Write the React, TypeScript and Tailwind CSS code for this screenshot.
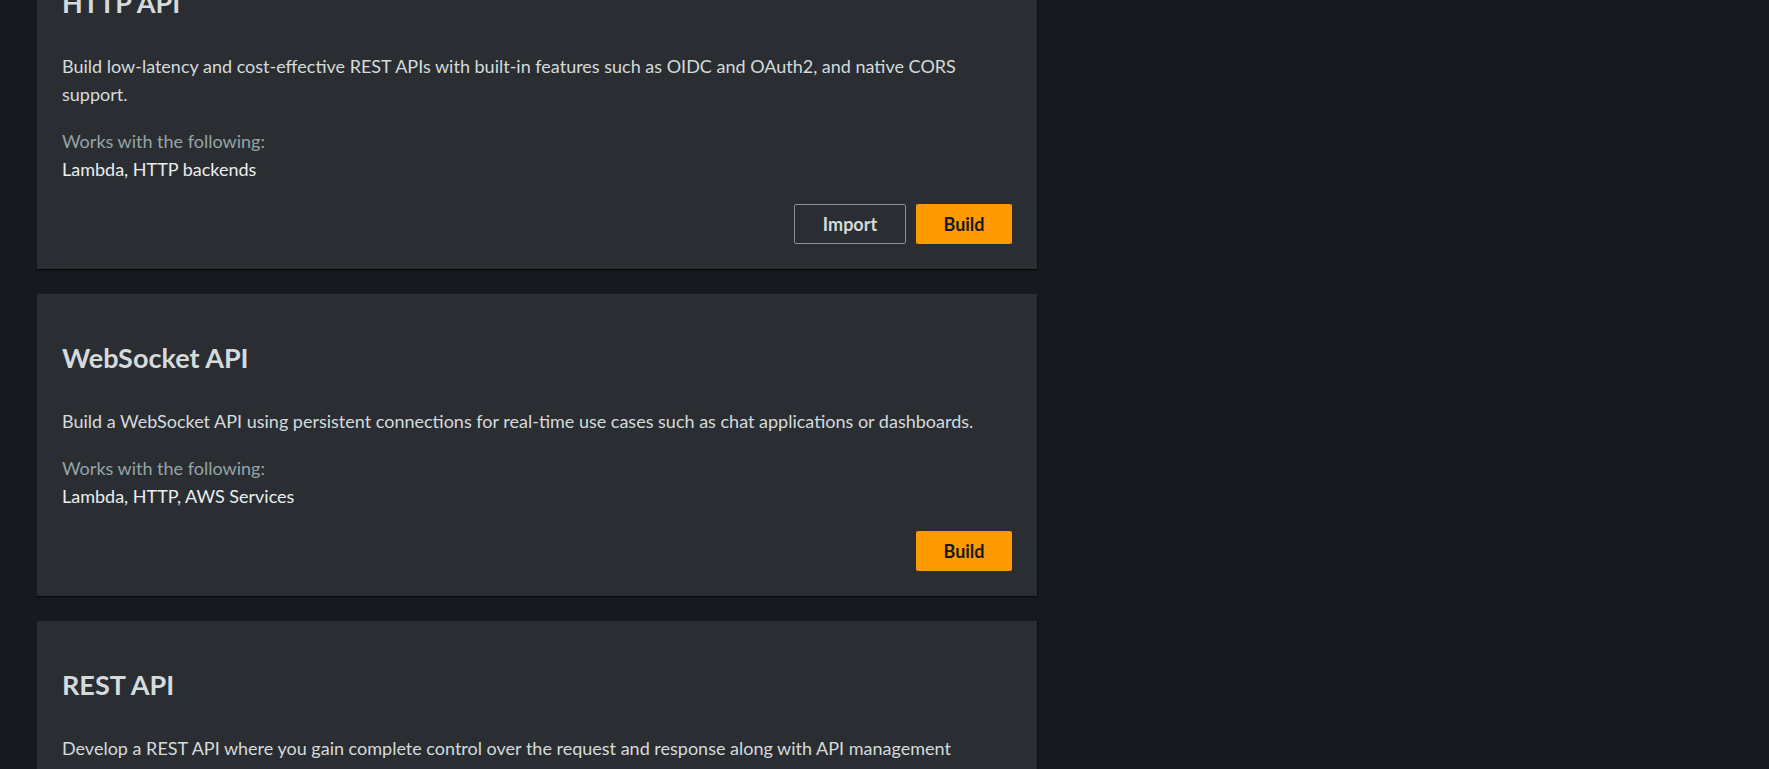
import React from "react";

const font = { fontFamily: "Lato, 'Noto Sans', sans-serif" };

type CardProps = {
  title: string;
  desc: string;
  works?: string;
  importBtn?: boolean;
};

function Card({ title, desc, works, importBtn }: CardProps) {
  return (
    <div className="bg-[#2a2e33] px-[25px] pt-[50px] pb-[25px] shadow-[0_1px_1px_0_rgba(0,0,0,0.5),1px_1px_1px_0_rgba(0,0,0,0.25)]">
      <h2 className="text-[27px] leading-[28px] font-bold text-[#d5dbdb]">{title}</h2>
      <p className="mt-[35px] text-[18px] leading-[28px] text-[#d5dbdb]">{desc}</p>
      {works && (
        <>
          <div className="mt-[20px] text-[18px] leading-[27.5px]">
            <div className="text-[#95a5a6]">Works with the following:</div>
            <div className="text-[#eaeded]">{works}</div>
          </div>
          <div className="mt-[21px] flex justify-end gap-[10px]">
            {importBtn && (
              <button className="h-[40px] w-[112px] rounded-[2px] border border-[#879596] text-[18px] font-bold text-[#d5dbdb]">
                Import
              </button>
            )}
            <button className="h-[40px] w-[96px] rounded-[2px] bg-[#ff9900] text-[18px] font-bold text-[#16191f]">
              Build
            </button>
          </div>
        </>
      )}
    </div>
  );
}

export default function App() {
  return (
    <div className="h-[769px] w-full overflow-hidden bg-[#16191f]" style={font}>
      <div className="-mt-[61px] ml-[37px] flex w-[1000px] flex-col gap-[25px]">
        <Card
          title="HTTP API"
          desc="Build low-latency and cost-effective REST APIs with built-in features such as OIDC and OAuth2, and native CORS support."
          works="Lambda, HTTP backends"
          importBtn
        />
        <Card
          title="WebSocket API"
          desc="Build a WebSocket API using persistent connections for real-time use cases such as chat applications or dashboards."
          works="Lambda, HTTP, AWS Services"
        />
        <Card
          title="REST API"
          desc="Develop a REST API where you gain complete control over the request and response along with API management capabilities."
          works="Lambda, HTTP, AWS Services"
          importBtn
        />
      </div>
    </div>
  );
}
